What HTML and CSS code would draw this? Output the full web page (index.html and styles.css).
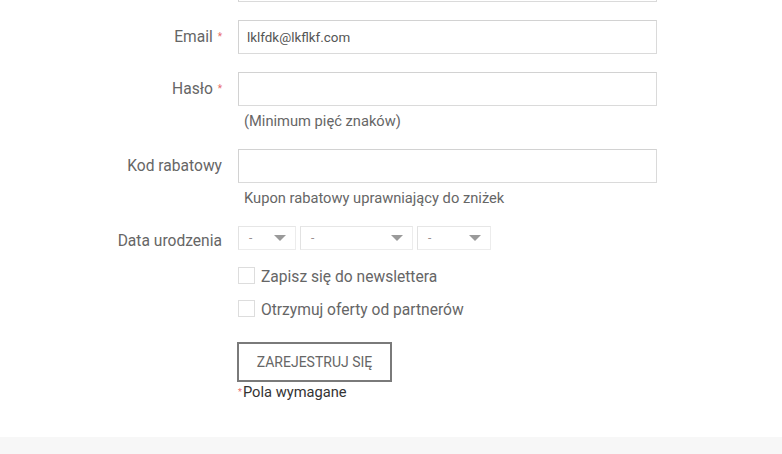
FILE: index.html
```html
<!DOCTYPE html>
<html lang="pl">
<head>
<meta charset="utf-8">
<link rel="stylesheet" href="styles.css">
</head>
<body>
<div class="page">
  <form class="form">
    <div class="row">
      <span class="label"></span>
      <div class="field"><input class="input" type="text"></div>
    </div>
    <div class="row">
      <label class="label">Email <span class="req">*</span></label>
      <div class="field"><input class="input" type="text" value="lklfdk@lkflkf.com"></div>
    </div>
    <div class="row">
      <label class="label">Hasło <span class="req">*</span></label>
      <div class="field">
        <input class="input" type="password">
        <div class="help">(Minimum pięć znaków)</div>
      </div>
    </div>
    <div class="row">
      <label class="label">Kod rabatowy</label>
      <div class="field">
        <input class="input" type="text">
        <div class="help">Kupon rabatowy uprawniający do zniżek</div>
      </div>
    </div>
    <div class="row row-date">
      <label class="label label-date">Data urodzenia</label>
      <div class="field selects">
        <div class="select sel-day"><span class="dash">-</span><span class="caret"></span></div>
        <div class="select sel-month"><span class="dash">-</span><span class="caret"></span></div>
        <div class="select sel-year"><span class="dash">-</span><span class="caret"></span></div>
      </div>
    </div>
    <div class="row row-check">
      <span class="label"></span>
      <div class="field check"><span class="box"></span><span class="check-text">Zapisz się do newslettera</span></div>
    </div>
    <div class="row row-check row-check-last">
      <span class="label"></span>
      <div class="field check"><span class="box"></span><span class="check-text">Otrzymuj oferty od partnerów</span></div>
    </div>
    <div class="row row-last">
      <span class="label"></span>
      <div class="field">
        <button type="button" class="btn">ZAREJESTRUJ SIĘ</button>
        <div class="required"><span class="req req-small">*</span>Pola wymagane</div>
      </div>
    </div>
  </form>
  <div class="footer"></div>
</div>
</body>
</html>
```

FILE: styles.css
```css
html, body {
  margin: 0;
  padding: 0;
  background: #ffffff;
}

body {
  font-family: Roboto, "Liberation Sans", Arial, sans-serif;
  font-size: 14px;
  color: #666666;
  overflow: hidden;
}

.page {
  width: 782px;
}

.form {
  display: flex;
  flex-direction: column;
  margin-top: -32px;
}

.row {
  display: grid;
  grid-template-columns: 222px 419px;
  column-gap: 16px;
  margin-bottom: 18px;
}

.label {
  display: block;
  text-align: right;
  height: 34px;
  line-height: 34px;
  font-size: 15.6px;
  color: #666666;
  white-space: nowrap;
}

.req {
  color: #e86a6a;
  font-size: 10px;
  vertical-align: 2px;
  margin-left: 1px;
}

.req-small {
  font-size: 9px;
  margin-left: 0;
  margin-right: 1px;
}

.field {
  display: flex;
  flex-direction: column;
}

.input {
  box-sizing: border-box;
  width: 419px;
  height: 34px;
  margin: 0;
  padding: 0 8px;
  border: 1px solid #dadada;
  border-top-color: #d2d2d2;
  border-left-color: #d2d2d2;
  background: #ffffff;
  font-family: Roboto, "Liberation Sans", Arial, sans-serif;
  font-size: 13.4px;
  color: #555555;
  outline: none;
}

.help {
  margin-top: 5px;
  padding-left: 6px;
  line-height: 20px;
  font-size: 14.7px;
  color: #666666;
}

.row-date {
  margin-bottom: 17px;
}

.label-date {
  box-sizing: border-box;
  height: 24px;
  line-height: 24px;
  padding-top: 3px;
}

.selects {
  flex-direction: row;
  gap: 4px;
  height: 24px;
}

.select {
  box-sizing: border-box;
  height: 24px;
  display: flex;
  align-items: center;
  justify-content: space-between;
  padding: 0 9px 0 10px;
  border: 1px solid #ececec;
  border-left-color: #e2e2e2;
  border-top-color: #e6e6e6;
  background: #ffffff;
}

.sel-day { width: 58px; }
.sel-month { width: 113px; }
.sel-year { width: 74px; }

.dash {
  font-size: 12px;
  color: #999090;
  line-height: 1;
}

.caret {
  width: 0;
  height: 0;
  border-left: 6px solid transparent;
  border-right: 6px solid transparent;
  border-top: 6px solid #9a9a9a;
}

.row-check {
  margin-bottom: 16px;
}

.row-check .label {
  height: 17px;
}

.row-check-last {
  margin-bottom: 25px;
}

.check {
  flex-direction: row;
  align-items: center;
  height: 17px;
  gap: 6px;
}

.box {
  box-sizing: border-box;
  width: 17px;
  height: 17px;
  border: 1px solid #dddddd;
  background: #ffffff;
}

.check-text {
  font-size: 15.6px;
  color: #666666;
  line-height: 17px;
  margin-top: 4px;
}

.btn {
  box-sizing: border-box;
  width: 155px;
  height: 40px;
  margin: 0 0 0 -1px;
  padding: 0;
  border: 2px solid #7a7a7a;
  background: #ffffff;
  font-family: Roboto, "Liberation Sans", Arial, sans-serif;
  font-size: 14px;
  color: #666666;
  cursor: pointer;
}

.required {
  line-height: 20px;
  font-size: 14.7px;
  color: #333333;
}

.row-last {
  margin-bottom: 0;
}

.footer {
  margin-top: 35px;
  height: 40px;
  background: #f7f7f7;
}
```
